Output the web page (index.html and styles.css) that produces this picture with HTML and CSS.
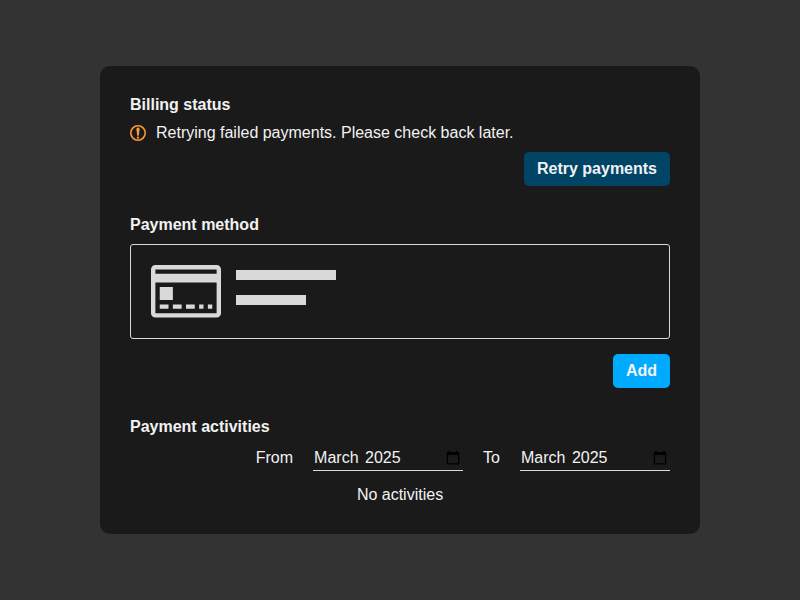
FILE: index.html
```html
<!DOCTYPE html>
<html lang="en">
<head>
<meta charset="utf-8">
<title>Billing</title>
<link rel="stylesheet" href="styles.css">
</head>
<body>
<main class="card">
  <section class="status">
    <h2>Billing status</h2>
    <p class="notice">
      <svg class="warn" viewBox="0 0 16 16" aria-hidden="true">
        <circle cx="8" cy="8" r="7.2" fill="none" stroke="#ff9933" stroke-width="1.6"/>
        <path d="M6.4 4.2a1.6 1.6 0 0 1 3.2 0L8.8 10.8H7.2z" fill="#ff9933"/>
        <circle cx="8" cy="12.7" r="1.15" fill="#ff9933"/>
      </svg>
      <span>Retrying failed payments. Please check back later.</span>
    </p>
    <div class="actions"><button class="btn btn-muted">Retry payments</button></div>
  </section>
  <section class="method">
    <h2>Payment method</h2>
    <div class="placeholder">
      <svg class="credit" viewBox="0 0 16 12" aria-hidden="true">
        <path fill="#d9d9d9" fill-rule="evenodd" d="M1 0h14a1 1 0 0 1 1 1v10a1 1 0 0 1-1 1H1a1 1 0 0 1-1-1V1a1 1 0 0 1 1-1zM1 1v1h14V1zM1 4v7h14V4z"/>
        <path fill="#d9d9d9" d="M2 5h3v3H2zM2 9h2v1H2zM5 9h2v1H5zM8 9h2v1H8zM11 9h1v1h-1zM13 9h1v1h-1z"/>
      </svg>
      <div class="lines"><div class="line"></div><div class="line short"></div></div>
    </div>
    <div class="actions"><button class="btn btn-primary">Add</button></div>
  </section>
  <section class="activities">
    <h2>Payment activities</h2>
    <div class="range">
      <span>From</span>
      <div class="month" tabindex="0">
        <span>March 2025</span>
        <svg class="calendar" viewBox="0 0 24 24" aria-hidden="true"><path d="M20 3h-1V1h-2v2H7V1H5v2H4c-1.1 0-2 .9-2 2v16c0 1.1 .9 2 2 2h16c1.1 0 2-.9 2-2V5c0-1.1-.9-2-2-2zm0 18H4V8h16v13z"/></svg>
      </div>
      <span>To</span>
      <div class="month" tabindex="0">
        <span>March 2025</span>
        <svg class="calendar" viewBox="0 0 24 24" aria-hidden="true"><path d="M20 3h-1V1h-2v2H7V1H5v2H4c-1.1 0-2 .9-2 2v16c0 1.1 .9 2 2 2h16c1.1 0 2-.9 2-2V5c0-1.1-.9-2-2-2zm0 18H4V8h16v13z"/></svg>
      </div>
    </div>
    <p class="empty">No activities</p>
  </section>
</main>
</body>
</html>
```
FILE: styles.css
```css
* {
  box-sizing: border-box;
}

body {
  margin: 0;
  height: 100vh;
  display: flex;
  align-items: center;
  justify-content: center;
  background: #333;
  color: #f2f2f2;
  font: 16px/18px "Liberation Sans", Arial, sans-serif;
}

.card {
  width: 600px;
  height: 468px;
  padding: 30px;
  border-radius: 10px;
  background: #1a1a1a;
}

h2,
p {
  margin: 0;
}

h2 {
  font-size: 16px;
  line-height: 18px;
}

.notice {
  display: flex;
  align-items: center;
  gap: 10px;
  margin-top: 10px;
}

.warn {
  width: 16px;
  height: 16px;
}

.actions {
  display: flex;
  justify-content: flex-end;
}

.status .actions {
  margin-top: 10px;
}

.method .actions {
  margin-top: 15px;
}

.btn {
  height: 34px;
  padding: 0 13px;
  border: 0;
  border-radius: 5px;
  color: #f2f2f2;
  font: bold 16px/18px "Liberation Sans", Arial, sans-serif;
}

.btn-muted {
  background: #004466;
}

.btn-primary {
  background: #00aaff;
}

.method,
.activities {
  margin-top: 30px;
}

.placeholder {
  display: flex;
  gap: 15px;
  height: 95px;
  margin-top: 10px;
  padding: 20px;
  border: 1px solid #d9d9d9;
  border-radius: 3px;
}

.credit {
  width: 70px;
  height: 52.5px;
}

.lines {
  display: flex;
  flex-direction: column;
  gap: 15px;
  padding-top: 5px;
}

.line {
  width: 100px;
  height: 10px;
  background: #d9d9d9;
}

.line.short {
  width: 70px;
}

.range {
  display: flex;
  align-items: center;
  justify-content: flex-end;
  gap: 20px;
  margin-top: 9px;
}

.month {
  display: flex;
  align-items: center;
  justify-content: space-between;
  width: 150px;
  height: 26px;
  padding: 0 2px 0 1px;
  border-bottom: 1px solid #d9d9d9;
  word-spacing: 2px;
}

.calendar {
  width: 16px;
  height: 15px;
  fill: #000;
}

.empty {
  margin-top: 15px;
  text-align: center;
}
```
